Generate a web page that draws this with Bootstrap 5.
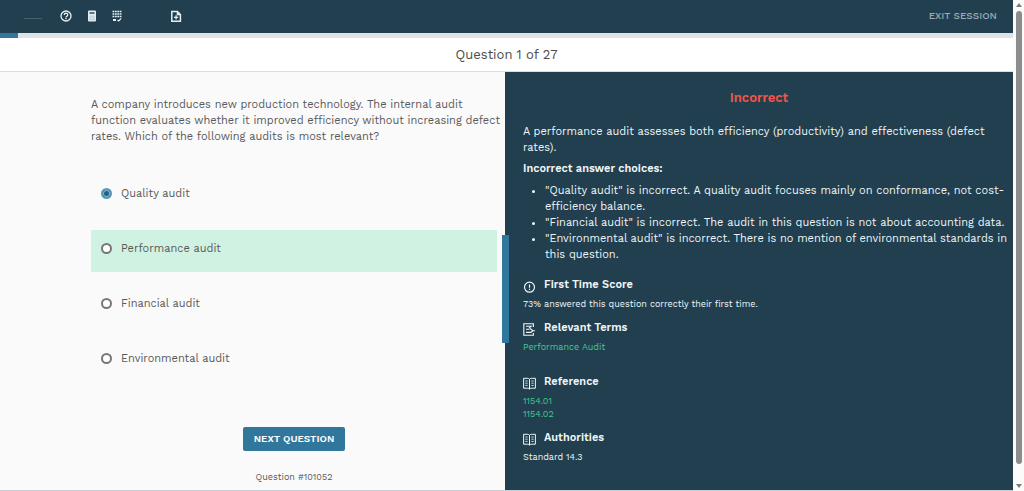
<!DOCTYPE html>
<html lang="en">
<head>
<meta charset="utf-8">
<meta name="viewport" content="width=device-width, initial-scale=1">
<title>Question 1 of 27</title>
<link href="https://cdn.jsdelivr.net/npm/bootstrap@5.3.0/dist/css/bootstrap.min.css" rel="stylesheet">
<style>
  :root { --navy: #213f4f; --blue: #31779c; --ink: #58595a; --green: #45c993; }
  body { font-family: "Work Sans", Inter, "Liberation Sans", sans-serif; font-size: 11px; line-height: 16px; color: var(--ink); background: #fff; }
  .page-frame { border-bottom: 1px solid #c3cfd5; }
  .topbar { background: var(--navy); height: 33px; padding: 0 16px 2px 24px; }
  .tool { color: #e4eff3; width: 14px; height: 14px; }
  .tool svg, .info-head svg { display: block; }
  .brand-line { width: 18px; height: 1px; background: #48606d; margin-top: 6px; }
  .tools { gap: 12px; margin-left: 17px; }
  .tool-note { margin-left: 32px; }
  .exit { color: #9badb6; font-size: 10px; font-weight: 500; }
  .session-progress { height: 5px; border-radius: 0; background: #dfe3e5; }
  .session-progress .progress-bar { background: var(--blue); }
  .question-title { font-size: 13px; line-height: 33px; color: #4b4c4d; border-bottom: 1px solid #dcdfe0; }
  .panes { display: grid; grid-template-columns: 505fr 508fr; }
  .pane-left { background: #fafafa; padding: 25px 8px 4px 91px; }
  .prompt { line-height: 16px; margin: 0 -8px 30px 0; }
  .choices { gap: 13px; }
  .choice { height: 42px; padding: 11px 10px; gap: 9px; }
  .choice.correct { background: #d0f2e3; }
  .choice input { appearance: none; width: 11px; height: 11px; margin: 2px 0 0; border: 2px solid #777; border-radius: 50%; background: #fff; flex: none; }
  .choice input:checked { border-color: #5b96b3; background: #1e6288; box-shadow: inset 0 0 0 1px #8ab8cf; }
  .next { background: var(--blue); color: #fff; font-size: 10px; font-weight: 600; line-height: 24px; border-radius: 2px; padding: 0 11px; margin-top: 45px; }
  .next:hover { background: #28688a; color: #fff; }
  .tiny { font-size: 9px; line-height: 13px; }
  .question-id { margin-top: 20px; }
  .pane-right { background: var(--navy); color: #eff6f8; padding: 16px 5px 24px 18px; }
  .grip { left: -3px; top: 163px; width: 7px; height: 108px; background: var(--blue); border: 0; padding: 0; cursor: col-resize; }
  .verdict { color: #f0564a; font-size: 13px; line-height: 20px; font-weight: 600; margin: 0 13px 16px 0; }
  .explain { margin-bottom: 5px; }
  .sub { font-size: 11px; line-height: 16px; font-weight: 600; margin-bottom: 6px; }
  .reasons { padding-left: 22px; margin-bottom: 14px; }
  .info { margin-bottom: 9px; }
  .info-wide { margin-bottom: 20px; }
  .info-head { gap: 8px; margin-bottom: 5px; }
  .info a { color: var(--green); }
  .scroll-rail { width: 11px; background: #fbfbfb; padding: 3px 2px; gap: 3px; }
  .scroll-thumb { width: 6px; background: #8c8c8c; border-radius: 3px; margin-bottom: 16px; }
</style>
</head>
<body>
<div class="d-flex min-vh-100">
  <div class="page-frame flex-grow-1 d-flex flex-column">
    <header class="topbar d-flex align-items-center">
      <span class="brand-line"></span>
      <nav class="tools d-flex align-items-center" aria-label="Session tools">
        <button class="tool btn p-0 border-0" aria-label="Help">
          <svg width="14" height="14" viewBox="0 0 14 14" fill="none" stroke="currentColor" stroke-width="1.3"><circle cx="7" cy="7" r="5"/><path d="M5.3 5.9a1.7 1.7 0 1 1 2.6 1.4c-.6.4-.9.6-.9 1.1M7 9.1v1.1"/></svg>
        </button>
        <button class="tool btn p-0 border-0" aria-label="Calculator">
          <svg width="14" height="14" viewBox="0 0 14 14"><rect x="3" y="1.5" width="8" height="11" rx="1" fill="currentColor"/><path d="M4.5 4h5" stroke="#213f4f" stroke-width="1.4"/><path d="M4.6 7.2h5M4.6 9h5M4.6 10.8h5" stroke="#7f98a4" stroke-width=".8" stroke-dasharray="1 1"/></svg>
        </button>
        <button class="tool btn p-0 border-0" aria-label="Keypad">
          <svg width="14" height="14" viewBox="0 0 14 14" fill="none" stroke="currentColor"><path d="M1.5 2.5h9M1.5 5h9M1.5 7.5h9" stroke-width="1.7" stroke-dasharray="1.8 .6"/><path d="M2 11h3" stroke-width="2"/><path d="M6.5 11l1.2 1 2.5-2.7" stroke-width="1.2"/></svg>
        </button>
        <button class="tool tool-note btn p-0 border-0" aria-label="Add note">
          <svg width="14" height="14" viewBox="0 0 14 14" fill="none" stroke="currentColor" stroke-width="1.5"><path d="M2.8 2.5h5.6l3 3v6.8H2.8z"/><path d="M8 2.5V6h3.4z" fill="currentColor" stroke-width=".6"/><path d="M7.1 6.2v4.2M5 8.3h4.2" stroke-width="1.3"/></svg>
        </button>
      </nav>
      <a href="#" class="exit ms-auto text-decoration-none">EXIT SESSION</a>
    </header>
    <div class="progress session-progress" role="progressbar" aria-label="Session progress" aria-valuenow="1" aria-valuemin="0" aria-valuemax="27">
      <div class="progress-bar" style="width: 1.8%"></div>
    </div>
    <h1 class="question-title text-center fw-normal m-0">Question 1 of 27</h1>

    <main class="panes flex-grow-1">
      <form class="pane-left">
        <p class="prompt" id="prompt">A company introduces new production technology. The internal audit function evaluates whether it improved efficiency without increasing defect rates. Which of the following audits is most relevant?</p>
        <div class="choices d-flex flex-column" role="radiogroup" aria-labelledby="prompt">
          <label class="choice d-flex align-items-start"><input type="radio" name="answer" checked>Quality audit</label>
          <label class="choice correct d-flex align-items-start"><input type="radio" name="answer">Performance audit</label>
          <label class="choice d-flex align-items-start"><input type="radio" name="answer">Financial audit</label>
          <label class="choice d-flex align-items-start"><input type="radio" name="answer">Environmental audit</label>
        </div>
        <div class="text-center">
          <button type="button" class="next btn border-0">NEXT QUESTION</button>
          <div class="question-id tiny">Question #101052</div>
        </div>
      </form>

      <section class="pane-right position-relative">
        <button class="grip position-absolute" aria-label="Resize panes"></button>
        <h2 class="verdict text-center">Incorrect</h2>
        <p class="explain">A performance audit assesses both efficiency (productivity) and effectiveness (defect rates).</p>
        <h3 class="sub">Incorrect answer choices:</h3>
        <ul class="reasons">
          <li>"Quality audit" is incorrect. A quality audit focuses mainly on conformance, not cost-efficiency balance.</li>
          <li>"Financial audit" is incorrect. The audit in this question is not about accounting data.</li>
          <li>"Environmental audit" is incorrect. There is no mention of environmental standards in this question.</li>
        </ul>
        <div class="info">
          <div class="info-head d-flex align-items-end">
            <svg width="13" height="13" viewBox="0 0 13 13" fill="none" stroke="currentColor" stroke-width="1.2"><circle cx="6.5" cy="7.2" r="5"/><path d="M6.5 4.4v3.4M6.5 8.7v1.2"/></svg>
            <h3 class="sub m-0">First Time Score</h3>
          </div>
          <div class="tiny">73% answered this question correctly their first time.</div>
        </div>
        <div class="info info-wide">
          <div class="info-head d-flex align-items-end">
            <svg width="13" height="13" viewBox="0 0 13 13" fill="none" stroke="currentColor" stroke-width="1.1"><path d="M10.4 4V.8H.8v11.4h9.6V10"/><path d="M3 3.3h5.2L6 5.2M3 6.3h3.5M3 9.4h5.5M7 5.5l3 2.2-2 1.6M9.5 7.7H12"/></svg>
            <h3 class="sub m-0">Relevant Terms</h3>
          </div>
          <div class="tiny"><a href="#" class="text-decoration-none">Performance Audit</a></div>
        </div>
        <div class="info">
          <div class="info-head d-flex align-items-end">
            <svg width="13" height="13" viewBox="0 0 13 13" fill="none" stroke="currentColor"><path d="M.6 1.3h3.6c1.2 0 2.3.4 2.3 1.2 0-.8 1.1-1.2 2.3-1.2h3.6v9.9H8.8c-1.2 0-2.3.3-2.3 1 0-.7-1.1-1-2.3-1H.6zM6.5 2.5v9.7"/><path d="M2.3 4h2.4M2.3 6.2h2.4M2.3 8.4h2.4M8.3 4h2.4M8.3 6.2h2.4M8.3 8.4h2.4" stroke-width=".8"/></svg>
            <h3 class="sub m-0">Reference</h3>
          </div>
          <div class="tiny"><a href="#" class="d-block text-decoration-none">1154.01</a><a href="#" class="d-block text-decoration-none">1154.02</a></div>
        </div>
        <div>
          <div class="info-head d-flex align-items-end">
            <svg width="13" height="13" viewBox="0 0 13 13" fill="none" stroke="currentColor"><path d="M.6 1.3h3.6c1.2 0 2.3.4 2.3 1.2 0-.8 1.1-1.2 2.3-1.2h3.6v9.9H8.8c-1.2 0-2.3.3-2.3 1 0-.7-1.1-1-2.3-1H.6zM6.5 2.5v9.7"/><path d="M2.3 4h2.4M2.3 6.2h2.4M2.3 8.4h2.4M8.3 4h2.4M8.3 6.2h2.4M8.3 8.4h2.4" stroke-width=".8"/></svg>
            <h3 class="sub m-0">Authorities</h3>
          </div>
          <div class="tiny">Standard 14.3</div>
        </div>
      </section>
    </main>
  </div>
  <div class="scroll-rail d-flex flex-column align-items-center flex-shrink-0" aria-hidden="true">
    <svg width="6" height="5" viewBox="0 0 6 5"><path d="M3 0l3 4H0z" fill="#7b7b7b"/></svg>
    <div class="scroll-thumb flex-grow-1"></div>
    <svg width="6" height="5" viewBox="0 0 6 5"><path d="M3 5L0 1h6z" fill="#7b7b7b"/></svg>
  </div>
</div>
<script src="https://cdn.jsdelivr.net/npm/bootstrap@5.3.0/dist/js/bootstrap.bundle.min.js"></script>
</body>
</html>
